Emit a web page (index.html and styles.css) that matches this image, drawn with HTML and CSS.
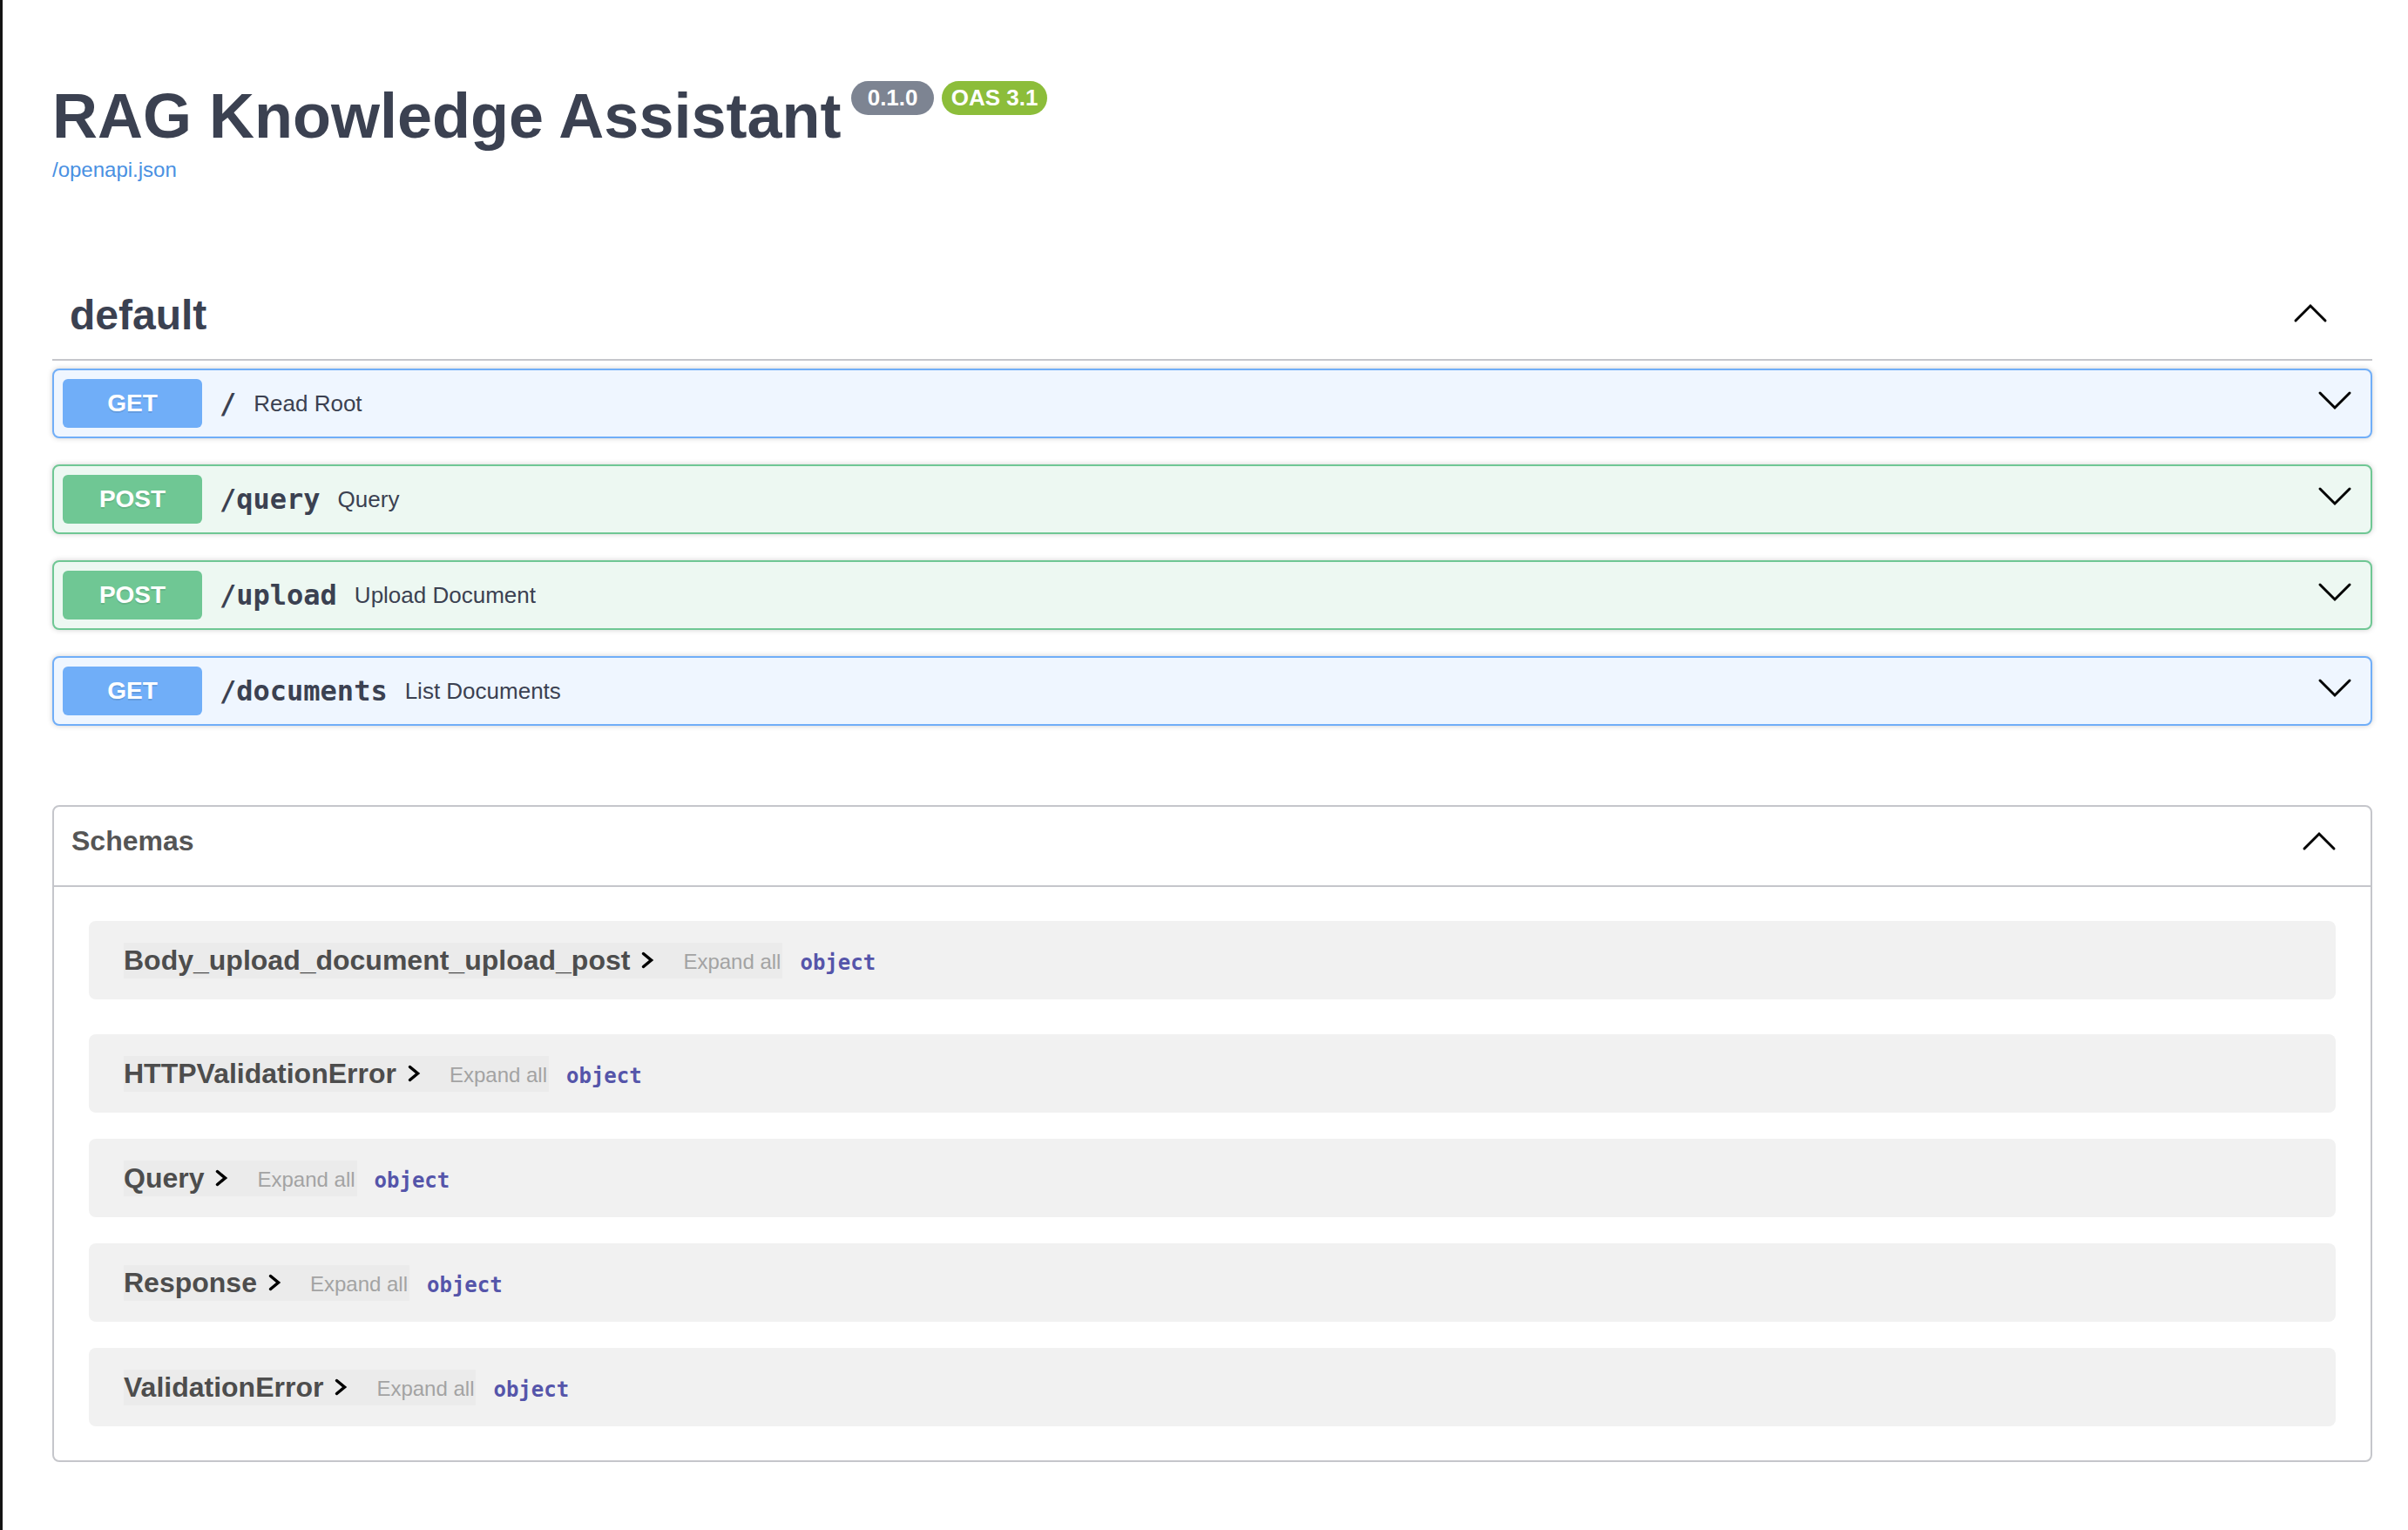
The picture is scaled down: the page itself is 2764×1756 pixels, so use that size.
FILE: index.html
```html
<!DOCTYPE html>
<html lang="en">
<head>
<meta charset="utf-8">
<title>RAG Knowledge Assistant - Swagger UI</title>
<link rel="stylesheet" href="styles.css">
</head>
<body>
<div class="wrapper">
  <div class="info">
    <h2 class="title"><span class="title-text">RAG Knowledge Assistant</span><span class="badge badge-version"> 0.1.0 </span><span class="badge badge-oas">OAS 3.1</span></h2>
    <a class="base-link" href="#">/openapi.json</a>
  </div>

  <div class="tag">
    <h3 class="tag-name">default</h3>
    <svg class="tag-arrow" width="40" height="40" viewBox="0 0 40 40"><polyline points="3,25 20,8 37,25"/></svg>
  </div>

  <div class="opblocks">
    <div class="opblock opblock-get">
      <div class="summary">
        <span class="method">GET</span>
        <span class="path">/</span>
        <span class="desc">Read Root</span>
        <svg class="op-arrow" width="40" height="40" viewBox="0 0 40 40"><polyline points="3,8 20,25 37,8"/></svg>
      </div>
    </div>
    <div class="opblock opblock-post">
      <div class="summary">
        <span class="method">POST</span>
        <span class="path">/query</span>
        <span class="desc">Query</span>
        <svg class="op-arrow" width="40" height="40" viewBox="0 0 40 40"><polyline points="3,8 20,25 37,8"/></svg>
      </div>
    </div>
    <div class="opblock opblock-post">
      <div class="summary">
        <span class="method">POST</span>
        <span class="path">/upload</span>
        <span class="desc">Upload Document</span>
        <svg class="op-arrow" width="40" height="40" viewBox="0 0 40 40"><polyline points="3,8 20,25 37,8"/></svg>
      </div>
    </div>
    <div class="opblock opblock-get">
      <div class="summary">
        <span class="method">GET</span>
        <span class="path">/documents</span>
        <span class="desc">List Documents</span>
        <svg class="op-arrow" width="40" height="40" viewBox="0 0 40 40"><polyline points="3,8 20,25 37,8"/></svg>
      </div>
    </div>
  </div>

  <section class="models">
    <div class="models-head">
      <h4 class="models-title">Schemas</h4>
      <svg class="models-arrow" width="40" height="40" viewBox="0 0 40 40"><polyline points="3,25 20,8 37,25"/></svg>
    </div>
    <div class="models-body">
      <div class="model first">
        <span class="model-btn"><span class="model-name">Body_upload_document_upload_post</span><svg class="model-chev" width="40" height="40" viewBox="0 0 40 40"><polyline points="15.5,12.5 24.5,20 15.5,27.5"/></svg></span>
        <span class="expand">Expand all</span>
        <span class="type">object</span>
      </div>
      <div class="model">
        <span class="model-btn"><span class="model-name">HTTPValidationError</span><svg class="model-chev" width="40" height="40" viewBox="0 0 40 40"><polyline points="15.5,12.5 24.5,20 15.5,27.5"/></svg></span>
        <span class="expand">Expand all</span>
        <span class="type">object</span>
      </div>
      <div class="model">
        <span class="model-btn"><span class="model-name">Query</span><svg class="model-chev" width="40" height="40" viewBox="0 0 40 40"><polyline points="15.5,12.5 24.5,20 15.5,27.5"/></svg></span>
        <span class="expand">Expand all</span>
        <span class="type">object</span>
      </div>
      <div class="model">
        <span class="model-btn"><span class="model-name">Response</span><svg class="model-chev" width="40" height="40" viewBox="0 0 40 40"><polyline points="15.5,12.5 24.5,20 15.5,27.5"/></svg></span>
        <span class="expand">Expand all</span>
        <span class="type">object</span>
      </div>
      <div class="model">
        <span class="model-btn"><span class="model-name">ValidationError</span><svg class="model-chev" width="40" height="40" viewBox="0 0 40 40"><polyline points="15.5,12.5 24.5,20 15.5,27.5"/></svg></span>
        <span class="expand">Expand all</span>
        <span class="type">object</span>
      </div>
    </div>
  </section>
</div>
</body>
</html>
```

FILE: styles.css
```css
* { box-sizing: border-box; }

html, body {
  margin: 0;
  padding: 0;
  background: #ffffff;
}

body {
  border-left: 3px solid #131313;
  min-height: 1756px;
  font-family: "Liberation Sans", Arial, sans-serif;
  color: #3b4151;
}

.wrapper {
  width: 2663px;
  margin-left: 57px;
}

/* ---------- info ---------- */
.info {
  padding-top: 92px;
}

.title {
  display: flex;
  align-items: flex-start;
  margin: 0;
  font-size: 72px;
  line-height: 82px;
  font-weight: 700;
  color: #3b4151;
}

.badge {
  margin-top: 1px;
  font-size: 26px;
  line-height: 31px;
  padding: 4px 11px;
  border-radius: 57px;
  color: #ffffff;
  font-weight: 700;
  white-space: pre;
}

.badge-version {
  background: #7d8492;
  margin-left: 12px;
}

.badge-oas {
  background: #8cbd3a;
  margin-left: 9px;
}

.base-link {
  display: block;
  width: max-content;
  margin-top: 7px;
  font-size: 24px;
  line-height: 28px;
  color: #4990e2;
  text-decoration: none;
}

/* ---------- tag header ---------- */
.tag {
  margin-top: 105px;
  height: 100px;
  display: flex;
  align-items: center;
  justify-content: space-between;
  padding: 0 51px 0 20px;
  border-bottom: 2px solid #c5c6cb;
  margin-bottom: 9px;
}

.tag-name {
  margin: -3px 0 0;
  font-size: 48px;
  line-height: 55px;
  font-weight: 700;
  color: #3b4151;
}

.tag-arrow polyline,
.op-arrow polyline,
.models-arrow polyline,
.model-chev polyline {
  fill: none;
  stroke: #000000;
  stroke-width: 3;
  stroke-linecap: round;
  stroke-linejoin: miter;
}

.model-chev polyline {
  stroke-width: 3.5;
}

/* ---------- operations ---------- */
.opblocks {
  display: flex;
  flex-direction: column;
}

.opblock {
  border: 2px solid;
  border-radius: 8px;
  box-shadow: 0 0 6px rgba(0, 0, 0, 0.19);
  margin-bottom: 30px;
}

.opblock-get {
  background: #eff6ff;
  border-color: #70aef8;
}

.opblock-post {
  background: #edf8f2;
  border-color: #6fc794;
}

.summary {
  display: flex;
  align-items: center;
  height: 76px;
  padding: 10px;
}

.method {
  width: 160px;
  height: 56px;
  line-height: 56px;
  text-align: center;
  border-radius: 6px;
  font-size: 28px;
  font-weight: 700;
  color: #ffffff;
  text-shadow: 0 2px 0 rgba(0, 0, 0, 0.1);
}

.opblock-get .method { background: #70aef8; }
.opblock-post .method { background: #6fc794; }

.path {
  padding: 0 20px;
  font-family: "DejaVu Sans Mono", "Liberation Mono", monospace;
  font-size: 32px;
  font-weight: 600;
  color: #3b4151;
}

.desc {
  font-size: 26px;
  color: #3b4151;
}

.op-arrow {
  margin-left: auto;
  margin-right: 11px;
}

/* ---------- models ---------- */
.models {
  margin-top: 61px;
  border: 2px solid #c5c6cb;
  border-radius: 8px;
}

.models-head {
  height: 92px;
  display: flex;
  align-items: flex-start;
  justify-content: space-between;
  padding: 0 39px 0 20px;
  border-bottom: 2px solid #c5c6cb;
}

.models-title {
  margin: 21px 0 0;
  font-size: 32px;
  line-height: 37px;
  font-weight: 700;
  color: #555555;
}

.models-arrow {
  margin-top: 23px;
}

.models-body {
  padding: 39px 0 9px;
}

.model {
  height: 90px;
  margin: 0 40px 30px;
  padding: 0 40px;
  display: flex;
  align-items: center;
  background: #f1f1f1;
  border-radius: 8px;
}

.model.first {
  margin-bottom: 40px;
}

.model-btn {
  display: flex;
  align-items: center;
  height: 41px;
  padding-right: 7px;
  background: rgba(0, 0, 0, 0.025);
}

.model-name {
  font-size: 32px;
  font-weight: 700;
  color: #4d4d4d;
}

.expand {
  display: flex;
  align-items: center;
  height: 41px;
  padding: 4px 2px 0 14px;
  font-size: 24px;
  color: #a3a3a3;
  background: rgba(0, 0, 0, 0.025);
}

.type {
  margin-left: 20px;
  margin-top: 6px;
  font-family: "DejaVu Sans Mono", "Liberation Mono", monospace;
  font-size: 24px;
  font-weight: 700;
  color: #5555aa;
}
```
